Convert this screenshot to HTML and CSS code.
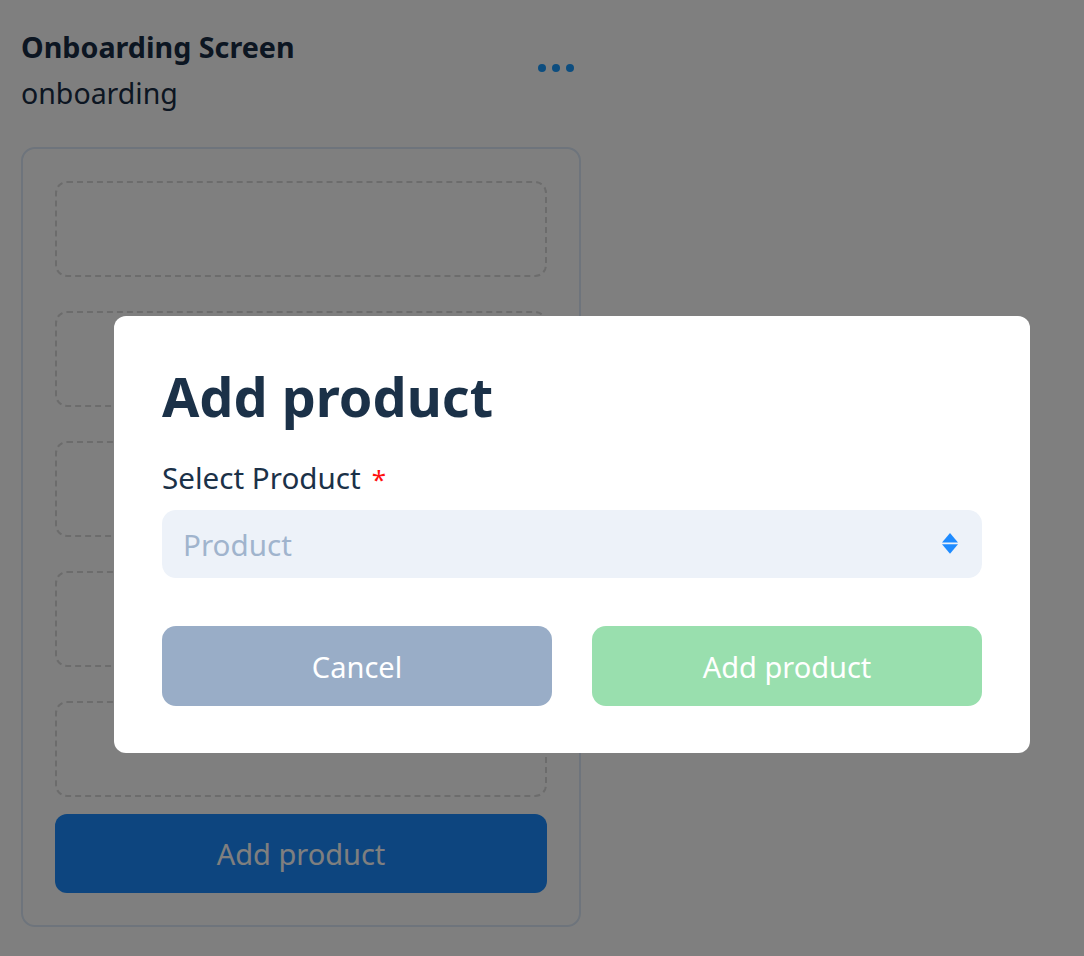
FILE: index.html
```html
<!DOCTYPE html>
<html lang="en">
<head>
<meta charset="utf-8">
<title>Onboarding Screen</title>
<link rel="stylesheet" href="styles.css">
</head>
<body>
<div class="page">
  <header class="screen-head">
    <div class="titles">
      <div class="title">Onboarding Screen</div>
      <div class="slug">onboarding</div>
    </div>
    <button class="more" aria-label="More"><span></span><span></span><span></span></button>
  </header>
  <section class="card">
    <div class="slot"></div>
    <div class="slot"></div>
    <div class="slot"></div>
    <div class="slot"></div>
    <div class="slot"></div>
    <button class="btn-primary">Add product</button>
  </section>
</div>

<div class="overlay"></div>

<div class="modal" role="dialog">
  <h2 class="modal-title">Add product</h2>
  <label class="field-label">Select Product<span class="req">*</span></label>
  <div class="select">
    <span class="placeholder">Product</span>
    <svg class="sort-icon" width="16" height="21" viewBox="0 0 16 21">
      <polygon points="8,0 16,9.5 0,9.5" fill="#1e8bff"/>
      <polygon points="0,11.3 16,11.3 8,20.8" fill="#1e8bff"/>
    </svg>
  </div>
  <div class="actions">
    <button class="btn btn-cancel">Cancel</button>
    <button class="btn btn-add">Add product</button>
  </div>
</div>
</body>
</html>
```
FILE: styles.css
```css
* { box-sizing: border-box; }

html, body {
  margin: 0;
  background: #ffffff;
  font-family: "Noto Sans", "Open Sans", sans-serif;
  color: #182c44;
}

.page {
  padding: 24px 0 0 21px;
  width: 581px;
}

.screen-head {
  display: flex;
  justify-content: space-between;
  align-items: center;
  width: 560px;
}

.title {
  font-size: 28.7px;
  line-height: 46px;
  font-weight: 700;
  color: #182c44;
}

.slug {
  font-size: 28.5px;
  line-height: 46px;
  font-weight: 400;
  color: #182c44;
}

.more {
  display: flex;
  gap: 6px;
  padding: 0 7px 4px 0;
  margin: 0;
  border: 0;
  background: none;
}

.more span {
  width: 8px;
  height: 8px;
  border-radius: 50%;
  background: #1a9bff;
}

.card {
  margin-top: 31px;
  width: 560px;
  border: 2px solid #dce9f8;
  border-radius: 14px;
  padding: 32px;
  display: flex;
  flex-direction: column;
  gap: 34px;
}

.slot {
  height: 96px;
  border: 2px dashed #d9d9d9;
  border-radius: 12px;
}

.btn-primary {
  margin-top: -17px;
  height: 79px;
  border: 0;
  border-radius: 12px;
  background: #1a8bff;
  color: #ffffff;
  font-family: inherit;
  font-size: 29px;
}

.overlay {
  position: fixed;
  inset: 0;
  background: rgba(0, 0, 0, 0.5);
}

.modal {
  position: absolute;
  left: 114px;
  top: 316px;
  width: 916px;
  background: #ffffff;
  border-radius: 12px;
  padding: 48px 48px 47px;
}

.modal-title {
  margin: 0;
  font-size: 54px;
  line-height: 64px;
  font-weight: 700;
  color: #1b3148;
}

.field-label {
  display: block;
  margin-top: 32px;
  font-size: 29.6px;
  line-height: 36px;
  color: #1b3148;
}

.req {
  color: #ff1010;
  margin-left: 11px;
  font-size: 26px;
}

.select {
  margin-top: 13px;
  height: 68px;
  border-radius: 14px;
  background: #edf2f9;
  display: flex;
  align-items: center;
  justify-content: space-between;
  padding: 0 24px 0 21px;
}

.placeholder {
  font-size: 29.6px;
  color: #a0b4cd;
}

.sort-icon {
  display: block;
  margin-top: -1px;
}

.actions {
  margin-top: 48px;
  display: grid;
  grid-template-columns: 1fr 1fr;
  gap: 40px;
}

.btn {
  height: 80px;
  border: 0;
  border-radius: 14px;
  color: #ffffff;
  font-family: inherit;
  font-size: 29px;
}

.btn-cancel { background: #99adc7; }
.btn-add { background: #99dfae; }
```
